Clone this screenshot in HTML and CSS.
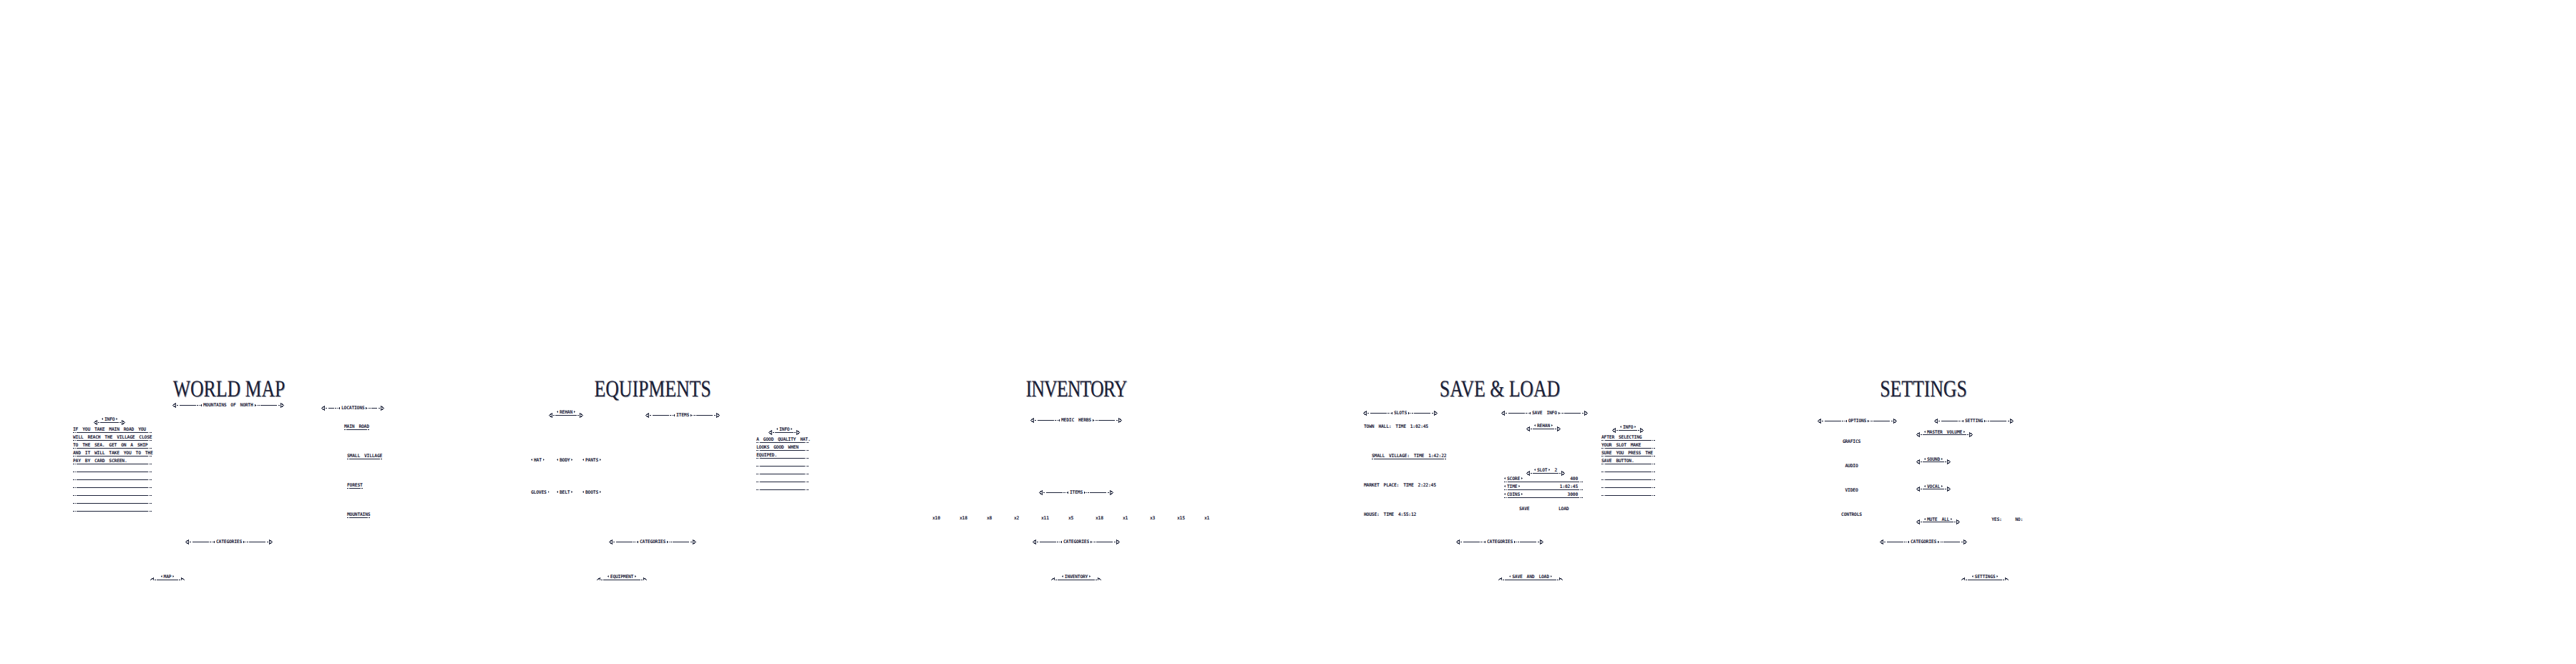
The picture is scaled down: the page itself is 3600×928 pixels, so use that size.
FILE: index.html
```html
<!DOCTYPE html>
<html lang="en">

<head>
    <meta charset="UTF-8">
    <meta name="viewport" content="width=device-width, initial-scale=1.0">
    <title>Game menus</title>
    <link rel="stylesheet" href="styles.css">
</head>

<body>
    <svg class="defs" width="0" height="0" aria-hidden="true">
        <symbol id="orn-long" viewBox="0 0 42 7">
            <path d="M4.5 .5 .5 3.5l4 3z" fill="none" stroke="currentColor" shape-rendering="crispEdges" />
            <path d="M6 3h2v1H6zM10 3h23v1H10zM34 3h2v1h-2zM37 3h1v1h-1zM39 3h1v1h-1zM40 2h1v3h-1z" fill="currentColor" />
        </symbol>
        <symbol id="orn-mid" viewBox="0 0 27 7">
            <path d="M4.5 .5 .5 3.5l4 3z" fill="none" stroke="currentColor" shape-rendering="crispEdges" />
            <path d="M6 3h2v1H6zM10 3h8v1h-8zM19 3h2v1h-2zM22 3h1v1h-1zM24 3h1v1h-1zM25 2h1v3h-1z" fill="currentColor" />
        </symbol>
        <symbol id="orn-short" viewBox="0 0 9 7">
            <path d="M4.5 .5 .5 3.5l4 3z" fill="none" stroke="currentColor" shape-rendering="crispEdges" />
            <path d="M6 3h2v1H6z" fill="currentColor" />
        </symbol>
    </svg>

    <div class="sheet">
        <!-- world map -->
        <section class="screen">
            <h1 class="title">WORLD MAP</h1>
            <div class="screen-body">
                <div class="col map-info">
                    <div class="frame"><svg class="end"><use href="#orn-short" /></svg><span class="mid"><span class="tag">INFO</span></span><svg class="end flip"><use href="#orn-short" /></svg></div>
                    <ul class="lines">
                        <li>IF YOU TAKE MAIN ROAD YOU</li>
                        <li>WILL REACH THE VILLAGE CLOSE</li>
                        <li>TO THE SEA. GET ON A SHIP</li>
                        <li>AND IT WILL TAKE YOU TO THE</li>
                        <li>PAY BY CARD SCREEN.</li>
                        <li></li>
                        <li></li>
                        <li></li>
                        <li></li>
                        <li></li>
                        <li></li>
                    </ul>
                </div>
                <div class="col map-main">
                    <div class="head"><svg class="orn"><use href="#orn-long" /></svg>MOUNTAINS OF NORTH<svg class="orn flip"><use href="#orn-long" /></svg></div>
                </div>
                <div class="col map-places">
                    <div class="head"><svg class="orn orn-cut"><use href="#orn-mid" /></svg>LOCATIONS<svg class="orn orn-cut flip"><use href="#orn-mid" /></svg></div>
                    <ul class="places">
                        <li class="place-first"><span class="under">MAIN ROAD</span></li>
                        <li><span class="under">SMALL VILLAGE</span></li>
                        <li><span class="under">FOREST</span></li>
                        <li><span class="under">MOUNTAINS</span></li>
                    </ul>
                </div>
            </div>
            <div class="screen-foot">
                <div class="head"><svg class="orn"><use href="#orn-long" /></svg>CATEGORIES<svg class="orn flip"><use href="#orn-long" /></svg></div>
                <div class="tabs">
                    <div class="frame tab tab-1"><svg class="end"><use href="#orn-short" /></svg><span class="mid"><span class="tag">MAP</span></span><svg class="end flip"><use href="#orn-short" /></svg></div>
                </div>
            </div>
        </section>

        <!-- equipments -->
        <section class="screen">
            <h1 class="title">EQUIPMENTS</h1>
            <div class="screen-body">
                <div class="col equip-gear">
                    <div class="frame frame-hero"><svg class="end"><use href="#orn-short" /></svg><span class="mid"><span class="tag">REHAN</span></span><svg class="end flip"><use href="#orn-short" /></svg></div>
                    <div class="gear">
                        <span class="tag">HAT</span>
                        <span class="tag">BODY</span>
                        <span class="tag">PANTS</span>
                        <span class="tag tag-open">GLOVES</span>
                        <span class="tag">BELT</span>
                        <span class="tag">BOOTS</span>
                    </div>
                </div>
                <div class="col equip-items">
                    <div class="head"><svg class="orn"><use href="#orn-long" /></svg>ITEMS<svg class="orn flip"><use href="#orn-long" /></svg></div>
                </div>
                <div class="col equip-info">
                    <div class="frame"><svg class="end"><use href="#orn-short" /></svg><span class="mid"><span class="tag">INFO</span></span><svg class="end flip"><use href="#orn-short" /></svg></div>
                    <ul class="lines">
                        <li>A GOOD QUALITY HAT.</li>
                        <li>LOOKS GOOD WHEN</li>
                        <li>EQUIPED.</li>
                        <li></li>
                        <li></li>
                        <li></li>
                        <li></li>
                    </ul>
                </div>
            </div>
            <div class="screen-foot">
                <div class="head"><svg class="orn"><use href="#orn-long" /></svg>CATEGORIES<svg class="orn flip"><use href="#orn-long" /></svg></div>
                <div class="tabs">
                    <div class="frame tab tab-2"><svg class="end"><use href="#orn-short" /></svg><span class="mid"><span class="tag">EQUIPMENT</span></span><svg class="end flip"><use href="#orn-short" /></svg></div>
                </div>
            </div>
        </section>

        <!-- inventory -->
        <section class="screen">
            <h1 class="title title-tight">INVENTORY</h1>
            <div class="screen-body inv-body">
                <div class="head inv-medic"><svg class="orn"><use href="#orn-long" /></svg>MEDIC HERBS<svg class="orn flip"><use href="#orn-long" /></svg></div>
                <div class="head inv-items"><svg class="orn"><use href="#orn-long" /></svg>ITEMS<svg class="orn flip"><use href="#orn-long" /></svg></div>
                <div class="counts">
                    <span>x10</span><span>x18</span><span>x8</span><span>x2</span><span>x11</span><span>x5</span><span>x18</span><span>x1</span><span>x3</span><span>x15</span><span>x1</span>
                </div>
            </div>
            <div class="screen-foot">
                <div class="head"><svg class="orn"><use href="#orn-long" /></svg>CATEGORIES<svg class="orn flip"><use href="#orn-long" /></svg></div>
                <div class="tabs">
                    <div class="frame tab tab-3"><svg class="end"><use href="#orn-short" /></svg><span class="mid"><span class="tag">INVENTORY</span></span><svg class="end flip"><use href="#orn-short" /></svg></div>
                </div>
            </div>
        </section>

        <!-- save and load -->
        <section class="screen">
            <h1 class="title">SAVE &amp; LOAD</h1>
            <div class="screen-body">
                <div class="col save-slots">
                    <div class="head"><svg class="orn"><use href="#orn-long" /></svg>SLOTS<svg class="orn flip"><use href="#orn-long" /></svg></div>
                    <ul class="places slots">
                        <li>TOWN HALL: TIME 1:02:45</li>
                        <li class="slot-active"><span class="under">SMALL VILLAGE: TIME 1:42:22</span></li>
                        <li>MARKET PLACE: TIME 2:22:45</li>
                        <li>HOUSE: TIME 4:55:12</li>
                    </ul>
                </div>
                <div class="col save-detail">
                    <div class="head"><svg class="orn"><use href="#orn-long" /></svg>SAVE INFO<svg class="orn flip"><use href="#orn-long" /></svg></div>
                    <div class="frame frame-rehan"><svg class="end"><use href="#orn-short" /></svg><span class="mid"><span class="tag">REHAN</span></span><svg class="end flip"><use href="#orn-short" /></svg></div>
                    <div class="frame frame-slot"><svg class="end"><use href="#orn-short" /></svg><span class="mid"><span class="tag">SLOT</span> 2</span><svg class="end flip"><use href="#orn-short" /></svg></div>
                    <ul class="lines stats">
                        <li><span class="tag">SCORE</span><span>400</span></li>
                        <li><span class="tag">TIME</span><span>1:02:45</span></li>
                        <li><span class="tag">COINS</span><span>3000</span></li>
                    </ul>
                    <div class="save-btns"><span>SAVE</span><span>LOAD</span></div>
                </div>
                <div class="col save-info">
                    <div class="frame"><svg class="end"><use href="#orn-short" /></svg><span class="mid"><span class="tag">INFO</span></span><svg class="end flip"><use href="#orn-short" /></svg></div>
                    <ul class="lines">
                        <li>AFTER SELECTING</li>
                        <li>YOUR SLOT MAKE</li>
                        <li>SURE YOU PRESS THE</li>
                        <li>SAVE BUTTON.</li>
                        <li></li>
                        <li></li>
                        <li></li>
                        <li></li>
                    </ul>
                </div>
            </div>
            <div class="screen-foot">
                <div class="head"><svg class="orn"><use href="#orn-long" /></svg>CATEGORIES<svg class="orn flip"><use href="#orn-long" /></svg></div>
                <div class="tabs">
                    <div class="frame tab tab-4"><svg class="end"><use href="#orn-short" /></svg><span class="mid"><span class="tag">SAVE AND LOAD</span></span><svg class="end flip"><use href="#orn-short" /></svg></div>
                </div>
            </div>
        </section>

        <!-- settings -->
        <section class="screen">
            <h1 class="title">SETTINGS</h1>
            <div class="screen-body">
                <div class="col set-options">
                    <div class="head"><svg class="orn"><use href="#orn-long" /></svg>OPTIONS<svg class="orn flip"><use href="#orn-long" /></svg></div>
                    <ul class="options">
                        <li>GRAFICS</li>
                        <li>AUDIO</li>
                        <li>VIDEO</li>
                        <li>CONTROLS</li>
                    </ul>
                </div>
                <div class="col set-main">
                    <div class="head set-head"><svg class="orn"><use href="#orn-long" /></svg>SETTING<svg class="orn flip"><use href="#orn-long" /></svg></div>
                    <div class="frame frame-tight"><svg class="end"><use href="#orn-short" /></svg><span class="mid"><span class="tag">MASTER VOLUME</span></span><svg class="end flip"><use href="#orn-short" /></svg></div>
                    <div class="frame frame-tight"><svg class="end"><use href="#orn-short" /></svg><span class="mid"><span class="tag">SOUND</span></span><svg class="end flip"><use href="#orn-short" /></svg></div>
                    <div class="frame frame-tight"><svg class="end"><use href="#orn-short" /></svg><span class="mid"><span class="tag">VOCAL</span></span><svg class="end flip"><use href="#orn-short" /></svg></div>
                    <div class="mute">
                        <div class="frame frame-tight"><svg class="end"><use href="#orn-short" /></svg><span class="mid"><span class="tag">MUTE ALL</span></span><svg class="end flip"><use href="#orn-short" /></svg></div>
                        <span class="mute-yes">YES:</span><span>NO:</span>
                    </div>
                </div>
            </div>
            <div class="screen-foot">
                <div class="head"><svg class="orn"><use href="#orn-long" /></svg>CATEGORIES<svg class="orn flip"><use href="#orn-long" /></svg></div>
                <div class="tabs">
                    <div class="frame tab tab-5"><svg class="end"><use href="#orn-short" /></svg><span class="mid"><span class="tag">SETTINGS</span></span><svg class="end flip"><use href="#orn-short" /></svg></div>
                </div>
            </div>
        </section>
    </div>
</body>

</html>
```
FILE: styles.css
```css
* {
    margin: 0;
    padding: 0;
    box-sizing: border-box;
}

ul {
    list-style: none;
}

body {
    background: #fff;
    color: #1b2138;
    font-family: "DejaVu Sans Mono", "Liberation Mono", monospace;
    font-size: 6.4px;
    font-weight: 700;
    line-height: 7px;
    letter-spacing: -0.25px;
    word-spacing: 2.4px;
    text-rendering: geometricPrecision;
    white-space: nowrap;
}

.defs {
    display: block;
    height: 0;
}

.sheet {
    display: flex;
    padding: 524px 0 0 24px;
}

.screen {
    width: 592px;
    flex: none;
}

.title {
    height: 32px;
    font-family: "Liberation Serif", serif;
    font-size: 33px;
    font-weight: 400;
    line-height: 40px;
    letter-spacing: 0;
    word-spacing: 0;
    text-align: center;
    text-shadow: 1px 1px 0 #9a9ca4;
    transform: scaleX(0.78);
}

.title-tight {
    letter-spacing: -1px;
}

.screen-body {
    display: flex;
    align-items: flex-start;
    height: 198px;
}

.col {
    flex: none;
    display: flex;
    flex-direction: column;
    align-items: flex-start;
}

/* heading with the long ornament on both sides */
.head {
    display: flex;
    align-items: center;
    height: 7px;
    width: max-content;
}

.orn {
    display: block;
    flex: none;
    width: 42px;
    height: 7px;
    margin-right: 1px;
}

.orn.flip {
    margin: 0 0 0 1px;
}

.orn.orn-cut {
    width: 27px;
}

.flip {
    transform: scaleX(-1);
}

/* label sitting on a line with short ornament ends */
.frame {
    display: flex;
    align-items: flex-end;
    width: max-content;
}

.end {
    display: block;
    flex: none;
    width: 9px;
    height: 7px;
    margin-bottom: -3px;
}

.mid {
    display: block;
    padding: 0 2px;
    border-bottom: 1px solid currentColor;
}

.frame-tight .mid {
    line-height: 6px;
}

/* small triangles either side of a label */
.tag::before,
.tag::after {
    content: "";
    display: inline-block;
    width: 2px;
    height: 3px;
    vertical-align: 1px;
    background: currentColor;
}

.tag::before {
    margin-right: 2px;
    clip-path: polygon(100% 0, 0 50%, 100% 100%);
}

.tag::after {
    margin-left: 2px;
    clip-path: polygon(0 0, 100% 50%, 0 100%);
}

.tag-open::before {
    display: none;
}

/* ruled rows: two dots, a long line, two dots */
.lines {
    margin-top: 3px;
}

.lines li {
    height: 11px;
    padding-top: 2px;
    line-height: 8px;
    background: linear-gradient(90deg,
            currentColor 0 2px, transparent 2px 3px,
            currentColor 3px 4px, transparent 4px 5px,
            currentColor 5px calc(100% - 5px), transparent calc(100% - 5px) calc(100% - 4px),
            currentColor calc(100% - 4px) calc(100% - 3px), transparent calc(100% - 3px) calc(100% - 2px),
            currentColor calc(100% - 2px) 100%) left bottom / 100% 1px no-repeat;
}

.under {
    display: inline-block;
    height: 9px;
    line-height: 8px;
    background: linear-gradient(90deg,
            currentColor 0 2px, transparent 2px 3px,
            currentColor 3px calc(100% - 3px), transparent calc(100% - 3px) calc(100% - 2px),
            currentColor calc(100% - 2px) 100%) left bottom / 100% 1px no-repeat;
}

/* place lists */
.places {
    display: flex;
    flex-direction: column;
    align-items: flex-start;
    gap: 32px;
    margin-top: 18px;
    padding-left: 36px;
}

.places li {
    height: 9px;
    line-height: 8px;
}

.place-first {
    margin-left: -4px;
}

/* world map */
.map-info {
    width: 110px;
    margin-left: 78px;
    padding-top: 27px;
}

.map-info .frame {
    margin-left: 29px;
}

.map-info .lines {
    width: 100%;
}

.map-main {
    width: 158px;
    margin-left: 29px;
    padding-top: 7px;
}

.map-places {
    width: 88px;
    margin-left: 50px;
    padding-top: 11px;
}

/* equipments */
.equip-gear {
    width: 108px;
    margin-left: 126px;
    padding-top: 17px;
}

.frame-hero {
    margin-left: 25px;
}

.gear {
    display: grid;
    grid-template-columns: repeat(3, 36px);
    grid-auto-rows: 45px;
    margin-top: 59px;
}

.equip-items {
    width: 103px;
    margin-left: 52px;
    padding-top: 21px;
}

.equip-info {
    width: 73px;
    margin-left: 52px;
    padding-top: 41px;
}

.equip-info .frame {
    margin-left: 17px;
}

.equip-info .lines {
    width: 100%;
}

/* inventory */
.inv-body {
    flex-direction: column;
    align-items: center;
}

.inv-medic {
    margin-top: 28px;
}

.inv-items {
    margin-top: 94px;
}

.counts {
    display: grid;
    grid-template-columns: repeat(11, 38px);
    align-self: flex-start;
    margin: 29px 0 0 95px;
}

/* save and load */
.save-slots {
    width: 193px;
    margin-left: 105px;
    padding-top: 18px;
}

.places.slots {
    margin-top: 11px;
    padding-left: 1px;
}

.slot-active {
    margin-left: 11px;
}

.save-detail {
    width: 118px;
    padding-top: 18px;
}

.frame-rehan {
    margin: 11px 0 0 35px;
}

.frame-slot {
    margin: 54px 0 0 35px;
}

.stats {
    width: 110px;
    margin: 1px 0 0 4px;
}

.stats li {
    display: flex;
    justify-content: space-between;
    padding-right: 7px;
}

.save-btns {
    display: grid;
    grid-template-columns: 55px 55px;
    margin: 12px 0 0 25px;
}

.save-info {
    width: 75px;
    margin-left: 22px;
    padding-top: 38px;
}

.save-info .frame {
    margin-left: 15px;
}

.save-info .lines {
    width: 100%;
}

/* settings */
.set-options {
    width: 95px;
    margin-left: 148px;
    padding-top: 29px;
}

.options {
    width: 100%;
    margin-top: 22px;
    text-align: center;
}

.options li {
    height: 34px;
}

.set-main {
    width: 136px;
    margin-left: 43px;
    padding-top: 29px;
}

.set-head {
    margin-left: 25px;
}

.set-main .frame-tight {
    margin-top: 31px;
}

.set-main .set-head + .frame-tight {
    margin-top: 9px;
}

.mute {
    display: flex;
    align-items: flex-start;
    margin-top: 39px;
}

.set-main .mute .frame-tight {
    margin-top: 0;
}

.mute-yes {
    width: 33px;
    margin-left: 44px;
}

/* categories and the tab row underneath */
.screen-foot {
    display: flex;
    flex-direction: column;
    align-items: center;
}

.tabs {
    display: grid;
    grid-template-columns: repeat(5, 43px);
    margin-top: 42px;
}

.tab {
    justify-self: center;
}

.tab .mid {
    padding: 0 6px;
}

.tab-1 {
    grid-column: 1;
}

.tab-2 {
    grid-column: 2;
}

.tab-3 {
    grid-column: 3;
}

.tab-4 {
    grid-column: 4;
}

.tab-5 {
    grid-column: 5;
}
```
